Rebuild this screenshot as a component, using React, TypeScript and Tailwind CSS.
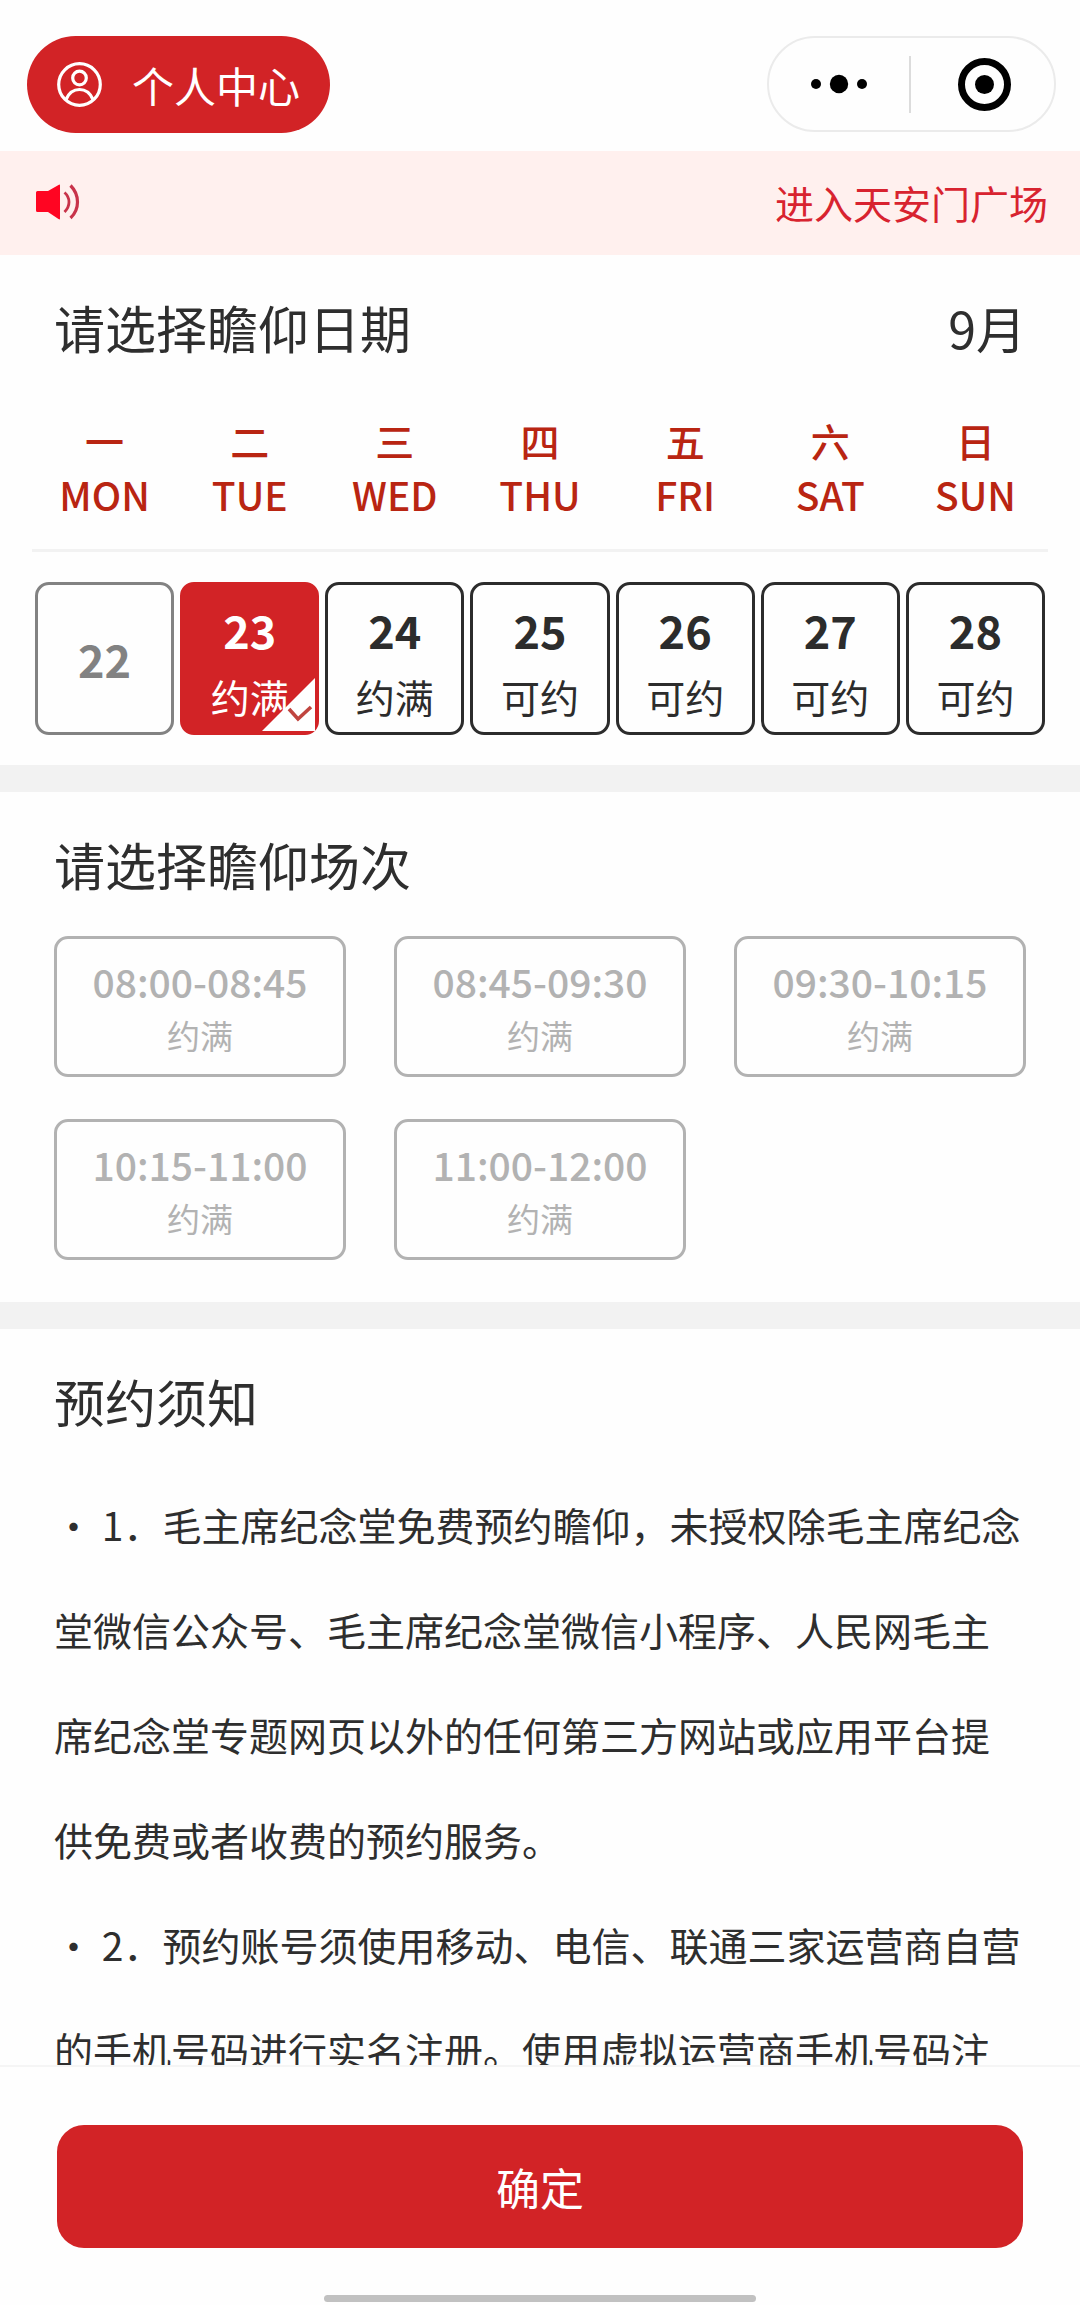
import React, { useState } from 'react';

const weekdays = [
  { cn: '一', en: 'MON' },
  { cn: '二', en: 'TUE' },
  { cn: '三', en: 'WED' },
  { cn: '四', en: 'THU' },
  { cn: '五', en: 'FRI' },
  { cn: '六', en: 'SAT' },
  { cn: '日', en: 'SUN' },
];

const dates = [
  { day: 22, status: '' },
  { day: 23, status: '约满' },
  { day: 24, status: '约满' },
  { day: 25, status: '可约' },
  { day: 26, status: '可约' },
  { day: 27, status: '可约' },
  { day: 28, status: '可约' },
];

const sessions = ['08:00-08:45', '08:45-09:30', '09:30-10:15', '10:15-11:00', '11:00-12:00'];

const notices = [
  '・ 1．毛主席纪念堂免费预约瞻仰，未授权除毛主席纪念堂微信公众号、毛主席纪念堂微信小程序、人民网毛主席纪念堂专题网页以外的任何第三方网站或应用平台提供免费或者收费的预约服务。',
  '・ 2．预约账号须使用移动、电信、联通三家运营商自营的手机号码进行实名注册。使用虚拟运营商手机号码注',
];

const UserIcon = () => (
  <svg className="size-[45px]" viewBox="0 0 45 45" fill="none" stroke="currentColor" strokeWidth="3.2">
    <circle cx="22.5" cy="22.5" r="20.8" />
    <circle cx="22.5" cy="16" r="6.8" />
    <path d="M9 37.5C12 30.5 17 27.5 22.5 27.5S33 30.5 36 37.5" />
  </svg>
);

const SpeakerIcon = () => (
  <svg className="h-9 w-11" viewBox="0 0 44 36" fill="none">
    <path d="M1.5 7H12L22.5 1Q24 0 24 1.5V34.5Q24 36 22.5 35L12 28H1.5Q0 28 0 26.5V8.5Q0 7 1.5 7Z" fill="#ff0522" />
    <path d="M28.5 8.5Q33 12.5 33 18T28.5 28" stroke="#c8334a" strokeWidth="2.8" />
    <path d="M34.5 1.5Q41.5 8.5 41.5 18T34.5 34" stroke="#c8334a" strokeWidth="3.2" />
  </svg>
);

const MoreIcon = () => (
  <svg className="h-5 w-14" viewBox="0 0 56 20" fill="currentColor">
    <circle cx="5" cy="10" r="5" />
    <circle cx="28" cy="10" r="9.2" />
    <circle cx="51" cy="10" r="5" />
  </svg>
);

const CloseIcon = () => (
  <svg className="size-[53px]" viewBox="0 0 53 53">
    <circle cx="26.5" cy="26.5" r="23" fill="none" stroke="currentColor" strokeWidth="7" />
    <circle cx="26.5" cy="26.5" r="9.5" fill="currentColor" />
  </svg>
);

// White corner with a tick, shown on the selected date
const SelectedCorner = () => (
  <svg className="absolute right-0 bottom-0 size-[54px]" viewBox="0 0 54 54" fill="none">
    <path d="M53 0V53H0Z" fill="#fff" />
    <path d="M27 31L36 41L49 29" stroke="#c0453f" strokeWidth="3.6" />
  </svg>
);

const SectionTitle = ({ children }: { children: React.ReactNode }) => (
  <h2 className="text-[51px] leading-[72px]">{children}</h2>
);

const App = () => {
  const [selected, setSelected] = useState(23);

  const getDateStyle = (day: number, status: string) => {
    if (!status) return 'border-[#828282] text-[#828282] justify-center';
    if (day === selected) return 'border-[#d22326] bg-[#d22326] text-white pt-3';
    return 'border-[#2c2c2c] text-[#2c2c2c] pt-3';
  };

  return (
    <div className="flex h-screen flex-col bg-[#fefefe] font-['Noto_Sans_CJK_SC',sans-serif] text-[#2e2e2e]">
      <header className="flex shrink-0 items-start justify-between pt-9 pr-6 pb-[18px] pl-[27px]">
        <button className="flex h-[97px] items-center gap-[30px] rounded-full bg-[#d22326] px-[30px] text-[42px] text-white">
          <UserIcon />
          个人中心
        </button>
        <div className="flex h-24 w-[289px] items-center rounded-full border-2 border-[#ebebeb] text-black">
          <button className="flex flex-1 justify-center" aria-label="更多">
            <MoreIcon />
          </button>
          <span className="h-[57px] w-[2px] bg-[#dcdcdc]" />
          <button className="flex flex-1 justify-center pl-1" aria-label="关闭">
            <CloseIcon />
          </button>
        </div>
      </header>

      <main className="min-h-0 flex-1 overflow-y-auto [scrollbar-width:none]">
        <div className="flex h-[104px] items-center justify-between bg-[#fff0ee] pr-8 pb-[2px] pl-9">
          <SpeakerIcon />
          <p className="text-[39px] text-[#d8232f]">进入天安门广场</p>
        </div>

        {/* Date */}
        <section className="px-8 pt-9 pb-[30px]">
          <div className="mb-[50px] flex justify-between px-[22px]">
            <SectionTitle>请选择瞻仰日期</SectionTitle>
            <span className="text-[50px] leading-[72px]">9月</span>
          </div>
          <div className="grid grid-cols-7 gap-[6px] border-b-3 border-[#f2f2f2] px-[3px] pb-7 text-center font-medium text-[#b92512]">
            {weekdays.map((item) => (
              <div key={item.en} className="text-[39px] leading-[54px]">
                <div>{item.cn}</div>
                <div>{item.en}</div>
              </div>
            ))}
          </div>
          <div className="mt-[30px] grid grid-cols-7 gap-[6px] px-[3px]">
            {dates.map(({ day, status }) => (
              <button
                key={day}
                disabled={!status}
                aria-pressed={day === selected}
                onClick={() => setSelected(day)}
                className={`relative flex h-[153px] flex-col items-center rounded-[14px] border-3 ${getDateStyle(day, status)}`}
              >
                <span className="text-[45px] leading-[66px] font-bold">{day}</span>
                {status && <span className="text-[39px] leading-[66px]">{status}</span>}
                {day === selected && <SelectedCorner />}
              </button>
            ))}
          </div>
        </section>

        {/* Session */}
        <section className="border-t-27 border-[#f2f2f2] px-[54px] pt-9 pb-[42px]">
          <SectionTitle>请选择瞻仰场次</SectionTitle>
          <div className="mt-9 grid grid-cols-3 gap-x-12 gap-y-[42px]">
            {sessions.map((time) => (
              <button
                key={time}
                disabled
                className="flex flex-col items-center rounded-[14px] border-3 border-[#b2b2b2] pt-[15px] pb-3 text-[#b2b2b2]"
              >
                <span className="text-[39px] leading-[54px] font-medium">{time}</span>
                <span className="text-[33px] leading-[54px]">约满</span>
              </button>
            ))}
          </div>
        </section>

        {/* Notice */}
        <section className="border-t-27 border-[#f2f2f2] px-[54px] pt-9">
          <SectionTitle>预约须知</SectionTitle>
          <div className="mt-[35px] text-[39px] leading-[105px]">
            {notices.map((text) => (
              <p key={text}>{text}</p>
            ))}
          </div>
        </section>
      </main>

      <footer className="shrink-0 border-t-2 border-[#f5f5f5] px-[57px] pt-[58px] pb-[3px]">
        <button className="h-[123px] w-full rounded-[27px] bg-[#d22326] text-[44px] text-white">确定</button>
        <div className="mx-auto mt-[47px] h-[7px] w-[432px] rounded-full bg-[#c1c1c1]" />
      </footer>
    </div>
  );
};

export default App;
